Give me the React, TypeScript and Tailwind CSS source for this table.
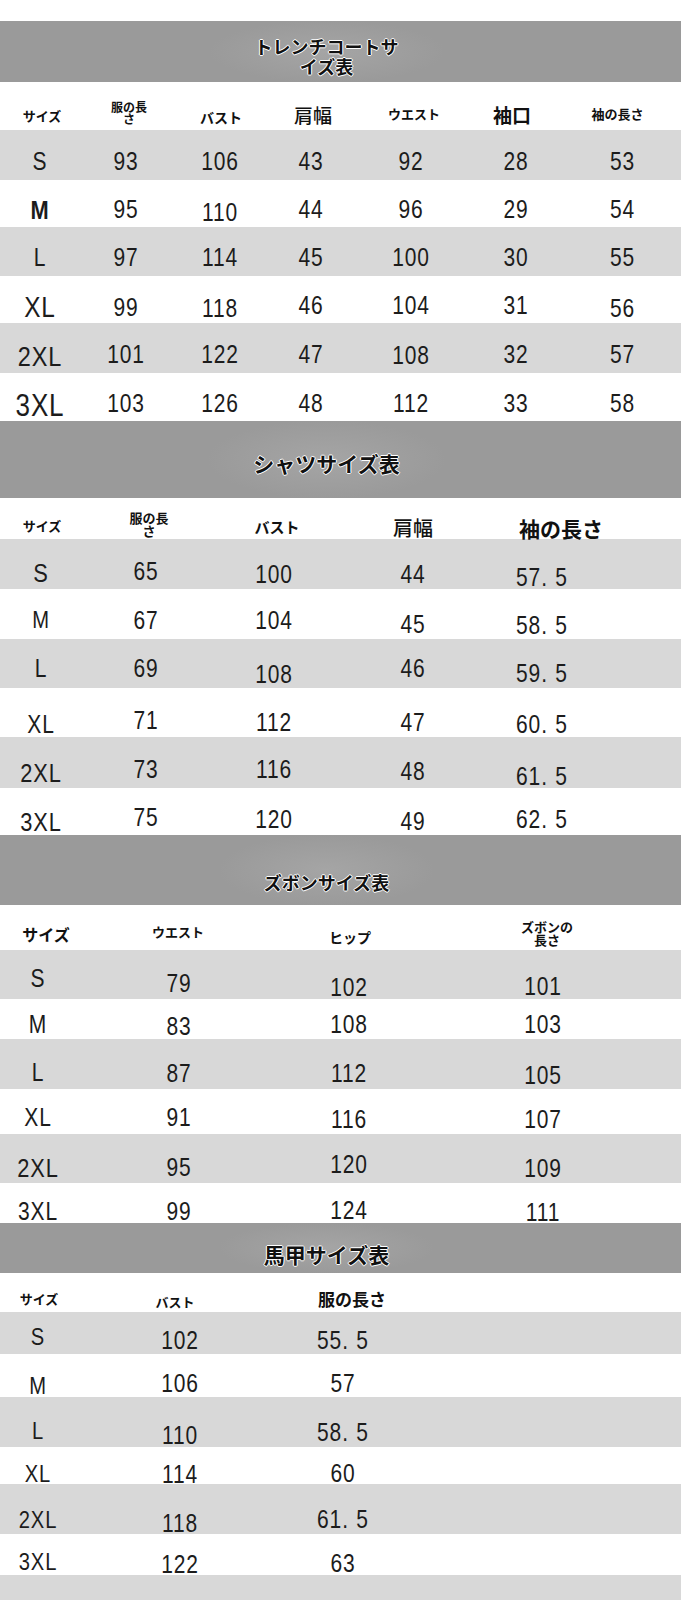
import React from "react";

const NUM = "font-['Liberation_Sans','Arial',sans-serif] scale-x-[0.84]";
const JP = "font-['Noto_Sans_CJK_JP','Noto_Sans',sans-serif]";

// vertical nudges, px below the row centre
const O: Record<number, string> = {
  0: "",
  3: "translate-y-[3px]",
  4: "translate-y-[4px]",
  5: "translate-y-[5px]",
  6: "translate-y-[6px]",
  7: "translate-y-[7px]",
  8: "translate-y-[8px]",
  9: "translate-y-[9px]",
  10: "translate-y-[10px]",
  11: "translate-y-[11px]",
  12: "translate-y-[12px]",
  13: "translate-y-[13px]",
  14: "translate-y-[14px]",
};

type Head = [string, string, number];
type Row = { h: string; grey: boolean; label: string; cells: [string, number][] };

type Section = {
  title: string[];
  titleH: string;
  titleCls: string;
  titleY: number;
  headH: string;
  headCols: string;
  head: Head[];
  cols: string;
  rows: Row[];
};

const sections: Section[] = [
  {
    title: ["トレンチコートサ", "イズ表"],
    titleH: "h-[61px]",
    titleCls: "text-[18px]",
    titleY: 4,
    headH: "h-[48px]",
    headCols: "grid-cols-[84px_90px_94px_90px_112px_84px_1fr]",
    head: [
      ["サイズ", "text-[13px] font-bold", 9],
      ["服の長\nさ", "text-[12px] font-bold leading-[11px]", 7],
      ["バスト", "text-[14px] font-bold", 11],
      ["肩幅", "text-[19px] font-medium", 8],
      ["ウエスト", "text-[13px] font-bold", 7],
      ["袖口", "text-[19px] font-semibold", 8],
      ["袖の長さ", "text-[13px] font-bold", 7],
    ],
    cols: "grid-cols-[80px_92px_96px_86px_114px_96px_1fr]",
    rows: [
      { h: "h-[50px]", grey: true, label: "text-[25px]", cells: [["S", 6], ["93", 6], ["106", 6], ["43", 6], ["92", 6], ["28", 6], ["53", 6]] },
      { h: "h-[47px]", grey: false, label: "text-[26px] font-bold", cells: [["M", 6], ["95", 6], ["110", 9], ["44", 6], ["96", 6], ["29", 6], ["54", 6]] },
      { h: "h-[49px]", grey: true, label: "text-[25px]", cells: [["L", 6], ["97", 6], ["114", 6], ["45", 6], ["100", 6], ["30", 6], ["55", 6]] },
      { h: "h-[47px]", grey: false, label: "text-[29px]", cells: [["XL", 8], ["99", 8], ["118", 9], ["46", 6], ["104", 6], ["31", 6], ["56", 9]] },
      { h: "h-[50px]", grey: true, label: "text-[28px]", cells: [["2XL", 9], ["101", 6], ["122", 6], ["47", 6], ["108", 7], ["32", 6], ["57", 6]] },
      { h: "h-[48px]", grey: false, label: "text-[31px]", cells: [["3XL", 8], ["103", 6], ["126", 6], ["48", 6], ["112", 6], ["33", 6], ["58", 6]] },
    ],
  },
  {
    title: ["シャツサイズ表"],
    titleH: "h-[77px]",
    titleCls: "text-[21px]",
    titleY: 4,
    headH: "h-[41px]",
    headCols: "grid-cols-[84px_130px_126px_146px_150px_1fr]",
    head: [
      ["サイズ", "text-[13px] font-bold", 7],
      ["服の長\nさ", "text-[13px] font-bold leading-[12px]", 5],
      ["バスト", "text-[15px] font-bold", 8],
      ["肩幅", "text-[20px] font-medium", 9],
      ["袖の長さ", "text-[21px] font-bold", 10],
    ],
    cols: "grid-cols-[82px_128px_128px_150px_108px_1fr]",
    rows: [
      { h: "h-[50px]", grey: true, label: "text-[26px]", cells: [["S", 9], ["65", 7], ["100", 10], ["44", 10], ["57.5", 13]] },
      { h: "h-[50px]", grey: false, label: "text-[24px]", cells: [["M", 6], ["67", 6], ["104", 6], ["45", 10], ["58.5", 11]] },
      { h: "h-[49px]", grey: true, label: "text-[25px]", cells: [["L", 5], ["69", 5], ["108", 11], ["46", 5], ["59.5", 10]] },
      { h: "h-[49px]", grey: false, label: "text-[25px]", cells: [["XL", 12], ["71", 8], ["112", 10], ["47", 10], ["60.5", 12]] },
      { h: "h-[51px]", grey: true, label: "text-[26px]", cells: [["2XL", 10], ["73", 7], ["116", 7], ["48", 9], ["61.5", 14]] },
      { h: "h-[47px]", grey: false, label: "text-[26px]", cells: [["3XL", 10], ["75", 6], ["120", 8], ["49", 10], ["62.5", 8]] },
    ],
  },
  {
    title: ["ズボンサイズ表"],
    titleH: "h-[70px]",
    titleCls: "text-[18px]",
    titleY: 12,
    headH: "h-[45px]",
    headCols: "grid-cols-[92px_172px_172px_222px_1fr]",
    head: [
      ["サイズ", "text-[16px] font-bold", 6],
      ["ウエスト", "text-[13px] font-bold", 4],
      ["ヒップ", "text-[14px] font-bold", 9],
      ["ズボンの\n長さ", "text-[13px] font-bold leading-[12px]", 5],
    ],
    cols: "grid-cols-[76px_206px_134px_254px_1fr]",
    rows: [
      { h: "h-[49px]", grey: true, label: "text-[25px]", cells: [["S", 4], ["79", 9], ["102", 13], ["101", 12]] },
      { h: "h-[40px]", grey: false, label: "text-[25px]", cells: [["M", 5], ["83", 7], ["108", 5], ["103", 5]] },
      { h: "h-[50px]", grey: true, label: "text-[25px]", cells: [["L", 8], ["87", 9], ["112", 9], ["105", 11]] },
      { h: "h-[45px]", grey: false, label: "text-[25px]", cells: [["XL", 6], ["91", 6], ["116", 8], ["107", 8]] },
      { h: "h-[49px]", grey: true, label: "text-[26px]", cells: [["2XL", 9], ["95", 9], ["120", 6], ["109", 10]] },
      { h: "h-[40px]", grey: false, label: "text-[25px]", cells: [["3XL", 8], ["99", 8], ["124", 7], ["111", 9]] },
    ],
  },
  {
    title: ["馬甲サイズ表"],
    titleH: "h-[50px]",
    titleCls: "text-[21px]",
    titleY: 6,
    headH: "h-[39px]",
    headCols: "grid-cols-[78px_194px_160px_1fr]",
    head: [
      ["サイズ", "text-[13px] font-bold", 6],
      ["バスト", "text-[13px] font-bold", 9],
      ["服の長さ", "text-[17px] font-bold", 6],
    ],
    cols: "grid-cols-[76px_208px_118px_1fr]",
    rows: [
      { h: "h-[42px]", grey: true, label: "text-[24px]", cells: [["S", 4], ["102", 7], ["55.5", 7]] },
      { h: "h-[43px]", grey: false, label: "text-[24px]", cells: [["M", 10], ["106", 8], ["57", 8]] },
      { h: "h-[50px]", grey: true, label: "text-[24px]", cells: [["L", 9], ["110", 13], ["58.5", 10]] },
      { h: "h-[37px]", grey: false, label: "text-[24px]", cells: [["XL", 8], ["114", 9], ["60", 8]] },
      { h: "h-[50px]", grey: true, label: "text-[24px]", cells: [["2XL", 11], ["118", 14], ["61.5", 10]] },
      { h: "h-[41px]", grey: false, label: "text-[24px]", cells: [["3XL", 7], ["122", 10], ["63", 9]] },
    ],
  },
];

const Value = ({ v }: { v: string }) => {
  const [a, b] = v.split(".");
  if (b === undefined) return <>{v}</>;
  return (
    <>
      {a}
      <span className="mr-[9px]">.</span>
      {b}
    </>
  );
};

const SizeTable = ({ s }: { s: Section }) => (
  <div>
    {/* title bar */}
    <div className={`${s.titleH} flex justify-center bg-[#9a9a9a] pr-[28px]`}>
      <div className="flex items-center self-stretch bg-[radial-gradient(ellipse_at_center,#a5a5a5_0%,#9a9a9a_72%)] px-[44px]">
        <div className={`${O[s.titleY]} flex flex-col items-center gap-[2px]`}>
          {s.title.map((line, i) => (
            <span
              key={i}
              className={`${JP} ${s.titleCls} block leading-none font-bold text-[#111] [text-shadow:1px_0_0_#fff,-1px_0_0_#fff,0_1px_0_#fff,0_-1px_0_#fff]`}
            >
              {line}
            </span>
          ))}
        </div>
      </div>
    </div>

    {/* column headings */}
    <div className={`grid ${s.headCols} ${s.headH} items-center bg-white`}>
      {s.head.map(([t, cls, y], i) => (
        <div key={i} className={`${JP} ${cls} ${O[y]} whitespace-pre-line text-center leading-none text-[#111]`}>
          {t}
        </div>
      ))}
    </div>

    {/* rows */}
    {s.rows.map((r, ri) => (
      <div key={ri} className={`grid ${s.cols} ${r.h} items-center ${r.grey ? "bg-[#d8d8d8]" : "bg-white"}`}>
        {r.cells.map(([v, y], ci) => (
          <div
            key={ci}
            className={`${NUM} ${ci === 0 ? r.label : "text-[25px]"} ${O[y]} text-center leading-none tracking-[1px] text-[#1c1c1c]`}
          >
            <Value v={v} />
          </div>
        ))}
      </div>
    ))}
  </div>
);

export default function App() {
  return (
    <div className="w-[681px] bg-white">
      <div className="h-[21px] bg-white" />
      {sections.map((s, i) => (
        <SizeTable key={i} s={s} />
      ))}
      <div className="h-[25px] bg-[#d8d8d8]" />
    </div>
  );
}
